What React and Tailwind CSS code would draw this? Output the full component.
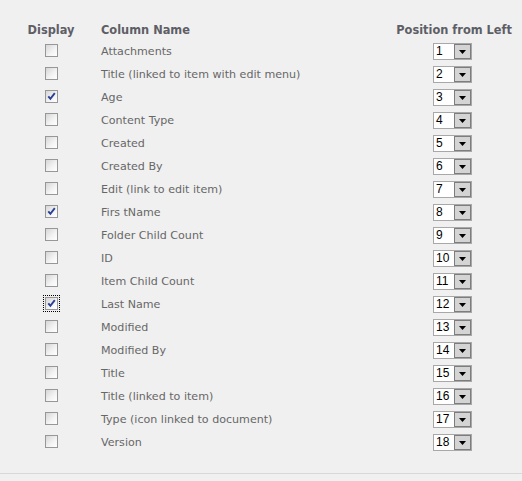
import React from "react";

const rows = [
  ["Attachments", false],
  ["Title (linked to item with edit menu)", false],
  ["Age", true],
  ["Content Type", false],
  ["Created", false],
  ["Created By", false],
  ["Edit (link to edit item)", false],
  ["Firs tName", true],
  ["Folder Child Count", false],
  ["ID", false],
  ["Item Child Count", false],
  ["Last Name", true, true],
  ["Modified", false],
  ["Modified By", false],
  ["Title", false],
  ["Title (linked to item)", false],
  ["Type (icon linked to document)", false],
  ["Version", false],
];

function Check({ checked, focused }) {
  const box = (
    <span className="relative block w-[13px] h-[13px] border border-[#979797] bg-[linear-gradient(135deg,#d6d6d6,#f4f4f4_60%,#ffffff)]">
      {checked && (
        <svg className="absolute left-[1px] top-[1px]" width="9" height="9" viewBox="0 0 9 9">
          <polyline points="1.3,4.3 3.4,6.8 7.8,1.2" fill="none" stroke="#2a3f96" strokeWidth="1.9" />
        </svg>
      )}
    </span>
  );
  if (focused) {
    return (
      <span className="block p-[2px] outline-1 outline-dotted outline-black -outline-offset-1">
        {box}
      </span>
    );
  }
  return box;
}

function Select({ value }) {
  return (
    <div className="flex w-[39px] h-[17px] border border-[#a8a8a8] bg-white">
      <div className="flex-1 pl-[2px] text-[12px] leading-[15px] text-black font-['Liberation_Sans',Arial,sans-serif]">
        {value}
      </div>
      <div className="w-[17px] h-[15px] border border-[#7d7d7d] bg-[#d4d4d4] flex items-center justify-center">
        <svg width="7" height="4" viewBox="0 0 7 4">
          <path d="M0 0 H7 L3.5 4 Z" fill="#000" />
        </svg>
      </div>
    </div>
  );
}

export default function App() {
  return (
    <div className="w-[522px] h-[481px] bg-[#f0f0f0] font-['DejaVu_Sans',Verdana,sans-serif] overflow-hidden">
      <div className="pt-[21px] h-[474px] border-b border-[#d8d8d8]">
        <div className="flex h-[19px] items-center text-[11.4px] font-bold text-[#5e5e66]">
          <div className="ml-[22px] w-[58px] text-center">Display</div>
          <div className="flex-1 pl-[21px]">Column Name</div>
          <div className="w-[116px] mr-[10px] text-right whitespace-nowrap">Position from Left</div>
        </div>
        {rows.map(([name, checked, focused], i) => (
          <div key={i} className="flex h-[23px] items-center">
            <div className="ml-[22px] w-[58px] flex justify-center pb-[2px]">
              <Check checked={checked} focused={focused} />
            </div>
            <div className="flex-1 pl-[21px] pt-[2px] text-[11.1px] text-[#676767]">{name}</div>
            <div className="w-[116px] mr-[10px] pl-[37px]">
              <Select value={i + 1} />
            </div>
          </div>
        ))}
      </div>
    </div>
  );
}
